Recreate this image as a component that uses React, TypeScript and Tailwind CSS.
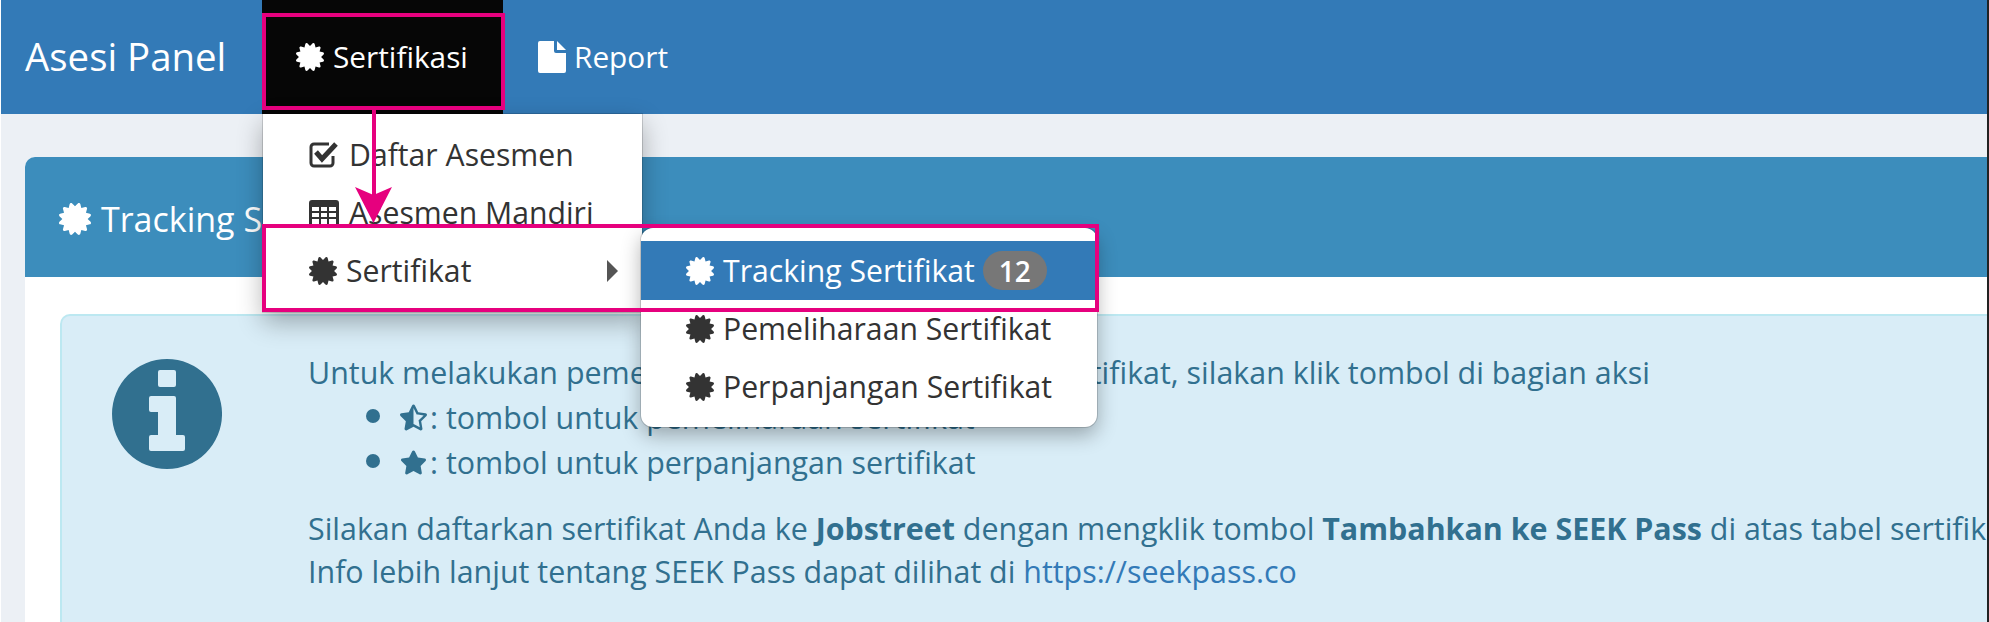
import { FaCertificate, FaStar, FaStarHalfAlt } from "react-icons/fa";

const font = "font-['Open_Sans',sans-serif]";

function CheckIcon() {
  return (
    <svg width="30" height="28" viewBox="0 0 30 28" fill="none">
      <path d="M24 15v7a3 3 0 0 1-3 3H5a3 3 0 0 1-3-3V6a3 3 0 0 1 3-3h15" stroke="currentColor" strokeWidth="3" />
      <path d="M7 11l6 7L27 3" stroke="currentColor" strokeWidth="5" />
    </svg>
  );
}

function TableIcon() {
  return (
    <svg width="30" height="27" viewBox="0 0 30 27" fill="currentColor">
      <path
        fillRule="evenodd"
        d="M3 0h24a3 3 0 0 1 3 3v21a3 3 0 0 1-3 3H3a3 3 0 0 1-3-3V3a3 3 0 0 1 3-3zM3 7v4h7V7zm9 0v4h6V7zm8 0v4h7V7zM3 13v4h7v-4zm9 0v4h6v-4zm8 0v4h7v-4zM3 19v5h7v-5zm9 0v5h6v-5zm8 0v5h7v-5z"
      />
    </svg>
  );
}

function FileIcon() {
  return (
    <svg width="28" height="32" viewBox="0 0 28 32" fill="currentColor">
      <path d="M2 0h14v10a2 2 0 0 0 2 2h10v18a2 2 0 0 1-2 2H2a2 2 0 0 1-2-2V2a2 2 0 0 1 2-2z" />
      <path d="M19 0l9 9h-9z" />
    </svg>
  );
}

function InfoIcon() {
  return (
    <svg width="110" height="110" viewBox="0 0 110 110" fill="currentColor">
      <path
        fillRule="evenodd"
        d="M55 0a55 55 0 1 1 0 110A55 55 0 0 1 55 0zM48 11a2 2 0 0 0-2 2v13a2 2 0 0 0 2 2h14a2 2 0 0 0 2-2V13a2 2 0 0 0-2-2zM39 37a2 2 0 0 0-2 2v12a2 2 0 0 0 2 2h7v23h-7a2 2 0 0 0-2 2v12a2 2 0 0 0 2 2h32a2 2 0 0 0 2-2V78a2 2 0 0 0-2-2h-7V39a2 2 0 0 0-2-2z"
      />
    </svg>
  );
}

function NavBar() {
  return (
    <nav className="flex h-[114px] items-stretch bg-[#337ab7] text-white">
      <div className="flex w-[262px] items-center pl-[25px] text-[38.4px]">Asesi Panel</div>
      <div className="flex w-[241px] items-center gap-[9px] bg-[#060606] pl-[34px] text-[29.8px]">
        <FaCertificate size={28} />
        <span>Sertifikasi</span>
      </div>
      <div className="flex items-center gap-[8px] pl-[35px] text-[29.8px]">
        <FileIcon />
        <span>Report</span>
      </div>
    </nav>
  );
}

function MainMenu() {
  return (
    <div className="absolute left-[263px] top-[114px] flex h-[198px] w-[379px] flex-col bg-white pt-[12px] text-[30.2px] text-[#333] shadow-[0_0_0_1px_rgba(0,0,0,0.15),0_10px_24px_rgba(0,0,0,0.3)]">
      <div className="flex h-[58px] items-center gap-[10px] pl-[46px]">
        <CheckIcon />
        <span>Daftar Asesmen</span>
      </div>
      <div className="flex h-[58px] items-center gap-[10px] pl-[46px]">
        <TableIcon />
        <span>Asesmen Mandiri</span>
      </div>
      <div className="flex h-[58px] items-center gap-[9px] pl-[46px]">
        <FaCertificate size={28} />
        <span>Sertifikat</span>
        <span className="ml-auto mr-[24px] h-0 w-0 border-y-[11px] border-l-[11px] border-y-transparent border-l-[#555]" />
      </div>
    </div>
  );
}

function SubMenu() {
  return (
    <div className="absolute left-[641px] top-[228px] flex h-[199px] w-[456px] flex-col rounded-[12px] bg-white pt-[13px] text-[30.2px] text-[#333] shadow-[0_0_0_1px_rgba(0,0,0,0.15),0_8px_20px_rgba(0,0,0,0.3)]">
      <div className="flex h-[59px] items-center gap-[9px] bg-[#337ab7] pl-[45px] text-white">
        <FaCertificate size={28} />
        <span>Tracking Sertifikat</span>
        <span className="ml-[-1px] flex h-[39px] w-[64px] items-center justify-center rounded-full bg-[#777] text-[28px] font-semibold">12</span>
      </div>
      <div className="flex h-[58px] items-center gap-[9px] pl-[45px]">
        <FaCertificate size={28} />
        <span>Pemeliharaan Sertifikat</span>
      </div>
      <div className="flex h-[58px] items-center gap-[9px] pl-[45px]">
        <FaCertificate size={28} />
        <span>Perpanjangan Sertifikat</span>
      </div>
    </div>
  );
}

function InfoAlert() {
  return (
    <div className="flex h-[400px] rounded-tl-[10px] border-l-2 border-t-2 border-[#bce8f1] bg-[#d9edf7] text-[30.4px] leading-[43px] text-[#31708f]">
      <div className="w-[246px] shrink-0 pl-[50px] pt-[43px]">
        <InfoIcon />
      </div>
      <div className="whitespace-nowrap pt-[35px]">
        <p>Untuk melakukan pemeliharaan atau perpanjangan sertifikat, silakan klik tombol di bagian aksi</p>
        <ul className="mb-[24px] list-disc pl-[92px] leading-[40.6px] marker:text-[38px]">
          <li>
            <FaStarHalfAlt className="mr-[3px] inline align-[-2px]" size={27} />: tombol untuk pemeliharaan sertifikat
          </li>
          <li>
            <FaStar className="mr-[3px] inline align-[-2px]" size={27} />: tombol untuk perpanjangan sertifikat
          </li>
        </ul>
        <p>
          Silakan daftarkan sertifikat Anda ke <b>Jobstreet</b> dengan mengklik tombol <b>Tambahkan ke SEEK Pass</b> di atas tabel sertifikat
        </p>
        <p>
          Info lebih lanjut tentang SEEK Pass dapat dilihat di <a className="text-[#337ab7]">https://seekpass.co</a>
        </p>
      </div>
    </div>
  );
}

export default function App() {
  return (
    <div className={`relative h-[622px] w-[1989px] overflow-hidden bg-[#ecf0f5] ${font}`}>
      <NavBar />
      <main className="pl-[25px] pt-[43px]">
        <section className="overflow-hidden rounded-tl-[10px] bg-white">
          <header className="flex h-[120px] items-center gap-[10px] bg-[#3c8dbc] pl-[34px] pt-[4px] text-[34px] text-white">
            <FaCertificate size={32} />
            <span>Tracking Sertifikat</span>
          </header>
          <div className="pl-[35px] pt-[37px]">
            <InfoAlert />
          </div>
        </section>
      </main>

      <MainMenu />
      <SubMenu />

      {/* annotation overlays */}
      <div className="absolute left-[262px] top-[13px] h-[97px] w-[243px] border-4 border-[#e6007e]" />
      <div className="absolute left-[262px] top-[224px] h-[88px] w-[837px] border-4 border-[#e6007e]" />
      <svg className="absolute left-[350px] top-[108px]" width="48" height="120" viewBox="0 0 48 120">
        <path d="M24 0V90" stroke="#e6007e" strokeWidth="4" />
        <path d="M5 79 L23.5 115 L42 79 L23.5 87Z" fill="#e6007e" />
      </svg>
      <div className="absolute left-0 top-0 h-full w-px bg-white" />
      <div className="absolute right-0 top-0 h-full w-[2px] bg-[#222]" />
    </div>
  );
}
